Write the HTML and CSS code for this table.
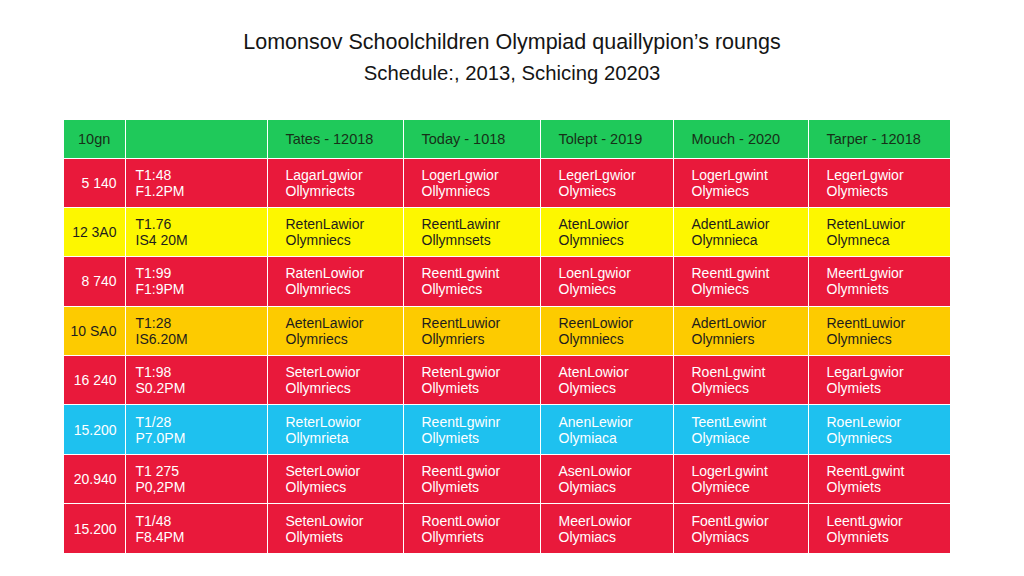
FILE: index.html
```html
<!DOCTYPE html>
<html lang="en">
<head>
<meta charset="utf-8">
<title>Lomonsov Schoolchildren Olympiad schedule</title>
<link rel="stylesheet" href="styles.css">
</head>
<body>
<header class="heading">
  <h1 class="title">Lomonsov Schoolchildren Olympiad quaillypion’s roungs</h1>
  <p class="subtitle">Schedule:, 2013, Schicing 20203</p>
</header>
<main class="wrap">
<table class="sched">
  <colgroup>
    <col class="c-num"><col class="c-time"><col class="c3"><col class="c4"><col class="c5"><col class="c6"><col class="c7">
  </colgroup>
  <thead>
    <tr class="head">
      <th class="num-h">10gn</th><th></th><th>Tates - 12018</th><th>Today - 1018</th><th>Tolept - 2019</th><th>Mouch - 2020</th><th>Tarper - 12018</th>
    </tr>
  </thead>
  <tbody>
    <tr class="red">
      <td class="num">5 140</td><td class="time">T1:48<br>F1.2PM</td>
      <td>LagarLgwior<br>Ollymriects</td><td>LogerLgwior<br>Ollymniecs</td><td>LegerLgwior<br>Olymiecs</td><td>LogerLgwint<br>Olymiecs</td><td>LegerLgwior<br>Olymiects</td>
    </tr>
    <tr class="yellow">
      <td class="num">12 3A0</td><td class="time">T1.76<br>IS4 20M</td>
      <td>RetenLawior<br>Olymniecs</td><td>ReentLawinr<br>Ollymnsets</td><td>AtenLowior<br>Olymniecs</td><td>AdentLawior<br>Olymnieca</td><td>RetenLuwior<br>Olymneca</td>
    </tr>
    <tr class="red">
      <td class="num">8 740</td><td class="time">T1:99<br>F1:9PM</td>
      <td>RatenLowior<br>Ollymriecs</td><td>ReentLgwint<br>Ollymiecs</td><td>LoenLgwior<br>Olymiecs</td><td>ReentLgwint<br>Olymiecs</td><td>MeertLgwior<br>Olymniets</td>
    </tr>
    <tr class="amber">
      <td class="num">10 SA0</td><td class="time">T1:28<br>IS6.20M</td>
      <td>AetenLawior<br>Olymriecs</td><td>ReentLuwior<br>Ollymriers</td><td>ReenLowior<br>Olymniecs</td><td>AdertLowior<br>Olymniers</td><td>ReentLuwior<br>Olymniecs</td>
    </tr>
    <tr class="red">
      <td class="num">16 240</td><td class="time">T1:98<br>S0.2PM</td>
      <td>SeterLowior<br>Ollymriecs</td><td>RetenLgwior<br>Ollymiets</td><td>AtenLowior<br>Olymiecs</td><td>RoenLgwint<br>Olymiecs</td><td>LegarLgwior<br>Olymiets</td>
    </tr>
    <tr class="cyan">
      <td class="num">15.200</td><td class="time">T1/28<br>P7.0PM</td>
      <td>ReterLowior<br>Ollymrieta</td><td>ReentLgwinr<br>Ollymiets</td><td>AnenLewior<br>Olymiaca</td><td>TeentLewint<br>Olymiace</td><td>RoenLewior<br>Olymniecs</td>
    </tr>
    <tr class="red">
      <td class="num">20.940</td><td class="time">T1 275<br>P0,2PM</td>
      <td>SeterLowior<br>Ollymiecs</td><td>ReentLgwior<br>Ollymiets</td><td>AsenLowior<br>Olymiacs</td><td>LogerLgwint<br>Olymiece</td><td>ReentLgwint<br>Olymiets</td>
    </tr>
    <tr class="red">
      <td class="num">15.200</td><td class="time">T1/48<br>F8.4PM</td>
      <td>SetenLowior<br>Ollymiets</td><td>RoentLowior<br>Ollymriets</td><td>MeerLowior<br>Olymiacs</td><td>FoentLgwior<br>Olymiacs</td><td>LeentLgwior<br>Olymniets</td>
    </tr>
  </tbody>
</table>
</main>
</body>
</html>
```
FILE: styles.css
```css
html, body {
  margin: 0;
  padding: 0;
  background: #ffffff;
}
body {
  font-family: "Liberation Sans", Arial, sans-serif;
  color: #111111;
  width: 1024px;
  height: 576px;
  overflow: hidden;
}
.heading {
  padding-top: 29px;
  text-align: center;
}
.title {
  margin: 0;
  font-size: 21.5px;
  font-weight: normal;
  line-height: 26px;
  color: #151515;
}
.subtitle {
  margin: 5px 0 0;
  font-size: 20.3px;
  line-height: 26px;
  color: #151515;
}
.wrap {
  padding: 34px 0 0 64px;
}
.sched {
  border-collapse: collapse;
  table-layout: fixed;
  width: 886px;
  font-size: 14px;
  line-height: 16px;
}
.c-num { width: 61px; }
.c-time { width: 142px; }
.c3 { width: 136px; }
.c4 { width: 137px; }
.c5 { width: 133px; }
.c6 { width: 135px; }
.c7 { width: 142px; }
.sched th, .sched td {
  border: 1px solid rgba(255, 255, 255, 0.6);
  padding: 0 4px 0 18px;
  text-align: left;
  vertical-align: middle;
  white-space: nowrap;
  overflow: hidden;
}
.sched th {
  font-weight: normal;
  font-size: 14.5px;
  color: #173018;
}
.sched tr:first-child th { border-top: 0; }
.sched th:first-child, .sched td:first-child { border-left: 0; }
.sched th:last-child, .sched td:last-child { border-right: 0; }
.sched tbody tr:last-child td { border-bottom: 0; }
.head {
  height: 38px;
  background: #1fc95a;
}
.sched th.num-h {
  padding-left: 14px;
}
.sched tbody tr {
  height: 49.4px;
}
.sched td.num {
  text-align: right;
  padding: 0 8px 0 2px;
  font-size: 14px;
}
.sched td.time {
  padding-left: 10px;
}
.red { background: #e9193b; color: #ffffff; }
.yellow { background: #fdf700; color: #1d1d1d; }
.amber { background: #fdcb00; color: #1d1d1d; }
.cyan { background: #1ec1ef; color: #ffffff; }
```
